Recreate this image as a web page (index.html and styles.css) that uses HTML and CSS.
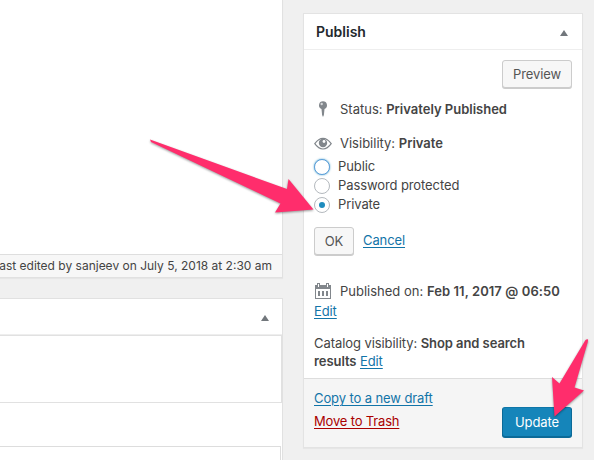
FILE: index.html
```
<!DOCTYPE html>
<html lang="en">
<head>
<meta charset="utf-8">
<title>Edit post</title>
<link rel="stylesheet" href="styles.css">
</head>
<body>
<div class="page">
  <main class="content">
    <section class="editor">
      <div class="editor-body"></div>
      <div class="editor-status"><span>Last edited by sanjeev on July 5, 2018 at 2:30 am</span></div>
    </section>
    <section class="metabox">
      <div class="metabox-head"><i class="toggle"></i></div>
      <div class="metabox-panel"></div>
      <div class="metabox-rest"><div class="metabox-field"></div></div>
    </section>
  </main>
  <aside class="publish">
    <header class="publish-head"><h2>Publish</h2><i class="toggle"></i></header>
    <div class="publish-body">
      <div class="preview-row"><button class="button preview">Preview</button></div>
      <div class="row status">
        <svg class="icon" viewBox="0 0 18 18"><path fill="#82878c" d="M9 1.200a4 4 0 0 1 1.500 7.700L9.900 15 9 17l-.9-2-.6-6.100A4 4 0 0 1 9 1.200z"/><circle cx="7.700" cy="4" r="1.200" fill="#d5d7d9"/></svg>
        <span>Status: <b>Privately Published</b></span>
      </div>
      <div class="row visibility">
        <svg class="icon" viewBox="0 0 18 18"><path fill="#fff" stroke="#82878c" stroke-width="1.200" d="M.8 9.700Q4.500 4.400 9 4.400T17.200 9.700Q13.500 15 9 15T.8 9.700z"/><circle cx="9" cy="9" r="4.200" fill="#82878c"/><circle cx="10" cy="7.500" r="1.400" fill="#fff"/></svg>
        <span>Visibility: <b>Private</b></span>
      </div>
      <div class="options">
        <label class="option"><i class="radio focus"></i><span>Public</span></label>
        <label class="option"><i class="radio"></i><span>Password protected</span></label>
        <label class="option"><i class="radio checked"></i><span>Private</span></label>
      </div>
      <div class="actions"><button class="button ok">OK</button><a class="link">Cancel</a></div>
      <div class="row date">
        <svg class="icon" viewBox="0 0 18 18"><path fill="#82878c" fill-rule="evenodd" d="M1 3h2V1h3v2h6V1h3v2h2v14H1zM4 2v3h1V2zM13 2v3h1V2zM2 7v9h14V7z"/><path fill="#82878c" d="M4 9h2v5H4zM8 9h2v5H8zM12 9h2v5h-2z"/></svg>
        <span>Published on: <b>Feb 11, 2017 @ 06:50</b></span>
      </div>
      <div class="date-edit"><a class="link">Edit</a></div>
      <p class="catalog">Catalog visibility: <b>Shop and search<br>results</b> <a class="link">Edit</a></p>
    </div>
    <footer class="publish-foot">
      <div class="foot-links"><a class="link copy">Copy to a new draft</a><a class="link trash">Move to Trash</a></div>
      <button class="button primary">Update</button>
    </footer>
  </aside>
  <svg class="arrows" viewBox="0 0 594 460">
    <path d="M150 139.500L287 189l1.500-10L313.500 209.500 275 212.500l5.500-9L151 142z"/>
    <path d="M587.500 339q1 1 .3 3L574.500 387.500l9.500 3L554.500 416.500 552 377l7.500 6.500L585.500 340z"/>
  </svg>
</div>
</body>
</html>
```
FILE: styles.css
```
* { box-sizing: border-box; }
body { margin: 0; background: #f0f0f0; color: #444; font: 13px/19px Inter, "Liberation Sans", sans-serif; }
b { font-weight: 600; }
.page { position: relative; display: flex; gap: 20px; width: 594px; height: 460px; overflow: hidden; }
.content { width: 283px; display: flex; flex-direction: column; gap: 20px; }
.editor { height: 278px; border: solid #e1e1e1; border-width: 0 1px 1px 0; background: #fff; box-shadow: 0 1px 1px rgba(0,0,0,.04); }
.editor-body { height: 254px; }
.editor-status { height: 23px; display: flex; justify-content: flex-end; align-items: center; overflow: hidden; padding: 0 10px 2px 0; border-top: 1px solid #dedede; background: #f7f7f7; font-size: 12px; white-space: nowrap; }
.metabox { height: 162px; border: solid #e1e1e1; border-width: 1px 1px 0 0; background: #fff; }
.metabox-head { height: 36px; display: flex; align-items: center; justify-content: flex-end; padding: 3px 13px 0 0; border-bottom: 1px solid #eee; }
.toggle { width: 0; height: 0; border: solid transparent; border-width: 0 4px 6px; border-bottom-color: #72777c; }
.metabox-panel { height: 68px; border: 1px solid #e1e1e1; border-left: 0; }
.metabox-rest { padding: 43px 1px 0 0; }
.metabox-field { height: 20px; border: solid #ddd; border-width: 1px 1px 0 0; }
.publish { width: 280px; height: 435px; margin-top: 13px; border: 1px solid #e3e3e3; background: #fff; box-shadow: 0 1px 1px rgba(0,0,0,.04); display: flex; flex-direction: column; }
.publish-head { height: 36px; display: flex; align-items: center; justify-content: space-between; padding: 0 14px 0 12px; border-bottom: 1px solid #eee; }
.publish-head .toggle { margin-top: 3px; }
h2 { margin: 0; font-size: 14px; font-weight: 600; color: #23282d; }
.publish-body { height: 328px; padding: 10px 10px 0; }
.preview-row { display: flex; justify-content: flex-end; height: 39px; }
.button { padding: 1px 0 0; border: 1px solid #ccc; border-radius: 3px; background: #f7f7f7; box-shadow: 0 1px 0 #ccc; color: #555; font: 13px/1 Inter, "Liberation Sans", sans-serif; letter-spacing: -.1px; }
.preview { width: 70px; height: 28px; }
.row { display: flex; align-items: center; gap: 8px; height: 20px; white-space: nowrap; }
.icon { width: 18px; height: 18px; flex: none; }
.visibility { margin-top: 14px; }
.date { margin-top: 26px; }
.date b { letter-spacing: .08px; }
.options { margin-top: 4px; letter-spacing: -.1px; }
.option { display: flex; align-items: center; gap: 8px; height: 19px; }
.radio { width: 16px; height: 16px; border: 1px solid #b4b9be; border-radius: 50%; background: #fff; }
.focus { border-color: #5b9dd9; box-shadow: 0 0 2px rgba(30,140,190,.8); }
.checked { display: grid; place-items: center; }
.checked::after { content: ""; width: 6px; height: 6px; border-radius: 50%; background: #1e8cbe; }
.actions { display: flex; align-items: center; gap: 9px; height: 29px; margin-top: 12px; }
.ok { width: 40px; height: 28px; }
.link { color: #1274a8; text-decoration: underline; text-underline-offset: 2px; text-decoration-thickness: 1px; letter-spacing: -.1px; }
.date-edit { padding-top: 1px; }
.catalog { margin: 13px 0 0; line-height: 18px; letter-spacing: -.07px; white-space: nowrap; }
.publish-foot { flex: 1; display: flex; justify-content: space-between; padding: 10px; border-top: 1px solid #ddd; background: #f5f5f5; }
.foot-links { display: flex; flex-direction: column; gap: 4px; align-items: flex-start; }
.trash { color: #a00; letter-spacing: -.17px; }
.primary { width: 70px; height: 30px; margin-top: 18px; border-color: #0e76a8 #0b6a98 #0b6a98; background: #1585ba; box-shadow: 0 1px 0 #0b6a98; color: #fff; }
.arrows { position: absolute; inset: 0; width: 594px; height: 460px; fill: #ff2d6c; filter: drop-shadow(0 1px 1px rgba(0,0,0,.4)); pointer-events: none; }
```
